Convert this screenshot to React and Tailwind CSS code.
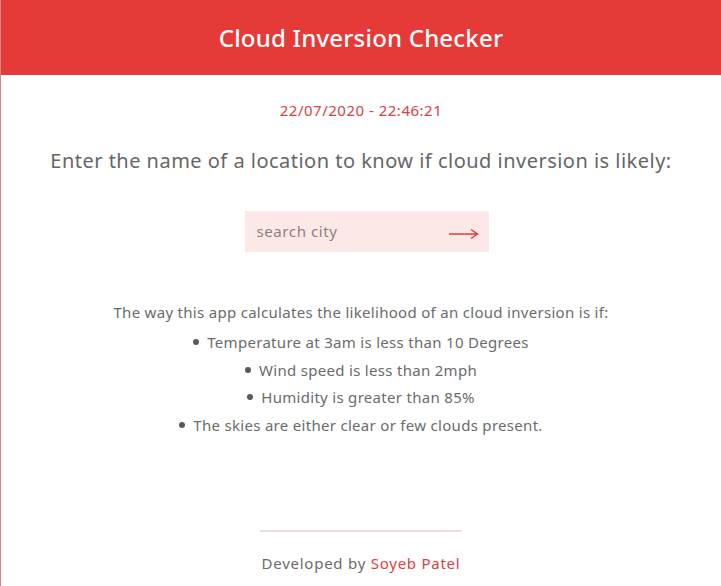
export default function App() {
  const rules = [
    'Temperature at 3am is less than 10 Degrees',
    'Wind speed is less than 2mph',
    'Humidity is greater than 85%',
    'The skies are either clear or few clouds present.',
  ]
  return (
    <div
      className="flex h-[586px] w-[721px] flex-col border-l border-[#d08a88] bg-white text-center"
      style={{ fontFamily: '"Noto Sans", sans-serif' }}
    >
      <header className="flex h-[75px] items-center justify-center bg-[#e53a38]">
        <h1 className="text-[24px] font-medium tracking-[0.2px] text-white">Cloud Inversion Checker</h1>
      </header>
      <div className="mt-[24px] text-[15px] tracking-[0.5px] text-[#d9413f]">22/07/2020 - 22:46:21</div>
      <p className="mt-[24px] text-[20px] tracking-[0.48px] text-[#666]">
        Enter the name of a location to know if cloud inversion is likely:
      </p>
      <div className="mt-[35px] ml-[11px] flex justify-center">
        <div className="flex h-[41px] w-[244px] items-center justify-between bg-[#fde8e8] pl-[12px] pr-[10px]">
          <span className="text-[15px] tracking-[0.6px] text-[#8a8080]">search city</span>
          <svg width="31" height="12" viewBox="0 0 31 12" className="mt-[6px]">
            <path d="M1 6 H29 M23 1.5 L29.5 6 L23 10.5" fill="none" stroke="#e53a38" strokeWidth="1.5" />
          </svg>
        </div>
      </div>
      <div className="mt-[49px] text-[15px] tracking-[0.3px] text-[#6b6b6b]">
        <p>The way this app calculates the likelihood of an cloud inversion is if:</p>
        <ul className="mt-[8px] flex flex-col items-center gap-[5px]">
          {rules.map(r => (
            <li key={r} className="flex items-center gap-[8px]">
              <span className="h-[6px] w-[6px] rounded-full bg-[#5a5a5a]" />
              {r}
            </li>
          ))}
        </ul>
      </div>
      <footer className="mt-auto mb-[12px] flex flex-col items-center">
        <div className="h-[2px] w-[202px] bg-[#f6d9d9]" />
        <p className="mt-[20px] text-[15px] tracking-[0.75px] text-[#6b6b6b]">
          Developed by <span className="text-[#d9413f]">Soyeb Patel</span>
        </p>
      </footer>
    </div>
  )
}
